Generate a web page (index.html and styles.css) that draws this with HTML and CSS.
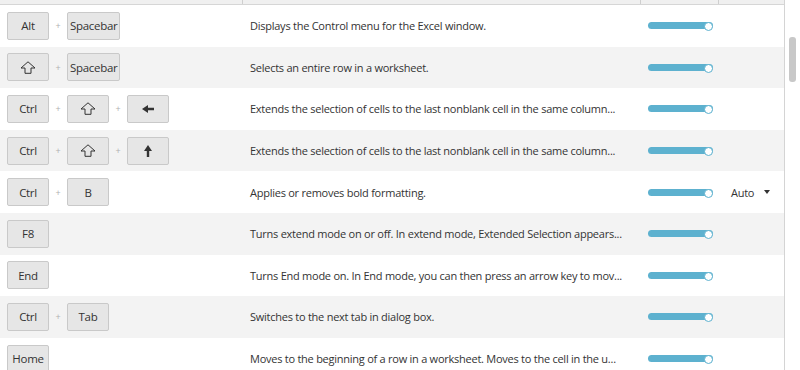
FILE: index.html
```html
<!DOCTYPE html>
<html lang="en">
	<head>
		<meta charset="UTF-8" />
		<meta name="viewport" content="width=device-width, initial-scale=1.0" />
		<title>Excel Shortcuts</title>
		<link rel="stylesheet" href="styles.css">
	</head>
	<body>
		<div class="page">
			<div class="grid">
				<div class="head">
					<div class="head-cell"></div>
					<div class="head-cell"></div>
					<div class="head-cell"></div>
					<div class="head-cell"></div>
				</div>

				<div class="row">
					<div class="keys"><span class="key">Alt</span><span class="plus">+</span><span class="key">Spacebar</span></div>
					<div class="desc">Displays the Control menu for the Excel window.</div>
					<div class="level"><div class="bar"></div></div>
					<div class="mode"></div>
				</div>

				<div class="row">
					<div class="keys">
						<span class="key"><svg class="icon" width="16" height="13" viewBox="0 0 16 13"><path d="M8 0.8 L15 7 H11 V12.3 H5 V7 H1 Z" fill="none" stroke="#333" stroke-width="1"/></svg></span>
						<span class="plus">+</span><span class="key">Spacebar</span>
					</div>
					<div class="desc">Selects an entire row in a worksheet.</div>
					<div class="level"><div class="bar"></div></div>
					<div class="mode"></div>
				</div>

				<div class="row">
					<div class="keys">
						<span class="key">Ctrl</span><span class="plus">+</span>
						<span class="key"><svg class="icon" width="16" height="13" viewBox="0 0 16 13"><path d="M8 0.8 L15 7 H11 V12.3 H5 V7 H1 Z" fill="none" stroke="#333" stroke-width="1"/></svg></span>
						<span class="plus">+</span>
						<span class="key"><svg class="icon" width="12" height="8" viewBox="0 0 12 8"><path d="M0 4 L6 0 V2.8 H12 V5.2 H6 V8 Z" fill="#333"/></svg></span>
					</div>
					<div class="desc">Extends the selection of cells to the last nonblank cell in the same column...</div>
					<div class="level"><div class="bar"></div></div>
					<div class="mode"></div>
				</div>

				<div class="row">
					<div class="keys">
						<span class="key">Ctrl</span><span class="plus">+</span>
						<span class="key"><svg class="icon" width="16" height="13" viewBox="0 0 16 13"><path d="M8 0.8 L15 7 H11 V12.3 H5 V7 H1 Z" fill="none" stroke="#333" stroke-width="1"/></svg></span>
						<span class="plus">+</span>
						<span class="key"><svg class="icon" width="8" height="12" viewBox="0 0 8 12"><path d="M4 0 L8 6 H5.2 V12 H2.8 V6 H0 Z" fill="#333"/></svg></span>
					</div>
					<div class="desc">Extends the selection of cells to the last nonblank cell in the same column...</div>
					<div class="level"><div class="bar"></div></div>
					<div class="mode"></div>
				</div>

				<div class="row">
					<div class="keys"><span class="key">Ctrl</span><span class="plus">+</span><span class="key">B</span></div>
					<div class="desc">Applies or removes bold formatting.</div>
					<div class="level"><div class="bar"></div></div>
					<div class="mode"><span class="mode-label">Auto</span><span class="caret"></span></div>
				</div>

				<div class="row">
					<div class="keys"><span class="key">F8</span></div>
					<div class="desc">Turns extend mode on or off. In extend mode, Extended Selection appears...</div>
					<div class="level"><div class="bar"></div></div>
					<div class="mode"></div>
				</div>

				<div class="row">
					<div class="keys"><span class="key">End</span></div>
					<div class="desc">Turns End mode on. In End mode, you can then press an arrow key to mov...</div>
					<div class="level"><div class="bar"></div></div>
					<div class="mode"></div>
				</div>

				<div class="row">
					<div class="keys"><span class="key">Ctrl</span><span class="plus">+</span><span class="key">Tab</span></div>
					<div class="desc">Switches to the next tab in dialog box.</div>
					<div class="level"><div class="bar"></div></div>
					<div class="mode"></div>
				</div>

				<div class="row">
					<div class="keys"><span class="key">Home</span></div>
					<div class="desc">Moves to the beginning of a row in a worksheet. Moves to the cell in the u...</div>
					<div class="level"><div class="bar"></div></div>
					<div class="mode"></div>
				</div>
			</div>

			<div class="scroll">
				<div class="thumb"></div>
			</div>
		</div>
	</body>
</html>
```

FILE: styles.css
```css
* { margin: 0; padding: 0; box-sizing: border-box; }
body {
	font-family: "Open Sans", "Noto Sans", sans-serif;
	font-size: 11px;
	letter-spacing: -0.25px;
	color: #333;
	background: white;
	overflow: hidden;
	height: 370px;
}
.page {
	display: flex;
	width: 800px;
}
.grid {
	width: 785px;
	border-right: 1px solid #d4d4d4;
}
.head {
	display: grid;
	grid-template-columns: 243px 398px 78px 1fr;
	height: 5px;
	background: #f0f0f0;
	border-bottom: 1px solid #d6d6d6;
}
.head-cell {
	border-right: 1px solid #cfcfcf;
}
.head-cell:last-child {
	border-right: none;
}
.row {
	display: grid;
	grid-template-columns: 243px 398px 78px 1fr;
	align-items: center;
	height: 41.6px;
}
.row:nth-child(odd) {
	background: #f3f3f3;
}
.keys {
	display: flex;
	align-items: center;
	padding-left: 7px;
}
.key {
	display: flex;
	align-items: center;
	justify-content: center;
	min-width: 42px;
	height: 28px;
	padding: 0 2px;
	background: #e6e6e6;
	border: 1px solid #c9c9c9;
	border-radius: 2px;
	font-size: 11.5px;
	letter-spacing: -0.3px;
	color: #333;
}
.plus {
	width: 18px;
	text-align: center;
	font-size: 9px;
	color: #b0b0b0;
}
.desc {
	padding-left: 7px;
	white-space: nowrap;
	overflow: hidden;
	color: #333;
}
.level {
	padding-left: 7px;
}
.bar {
	position: relative;
	width: 65px;
	height: 7px;
	border-radius: 4px;
	background: #5db1cf;
}
.bar::after {
	content: "";
	position: absolute;
	right: 0;
	top: 0;
	width: 7px;
	height: 7px;
	border: 1px solid #5db1cf;
	border-radius: 50%;
	background: white;
}
.mode {
	display: flex;
	align-items: center;
	padding-left: 12px;
}
.mode-label {
	color: #333;
}
.caret {
	margin-left: 10px;
	width: 0;
	height: 0;
	border-left: 3.5px solid transparent;
	border-right: 3.5px solid transparent;
	border-top: 4px solid #333;
}
.scroll {
	flex: 1;
	padding: 37px 0 0 4px;
}
.thumb {
	width: 7px;
	height: 45px;
	border-radius: 3px;
	background: #c8c8c8;
}
```
